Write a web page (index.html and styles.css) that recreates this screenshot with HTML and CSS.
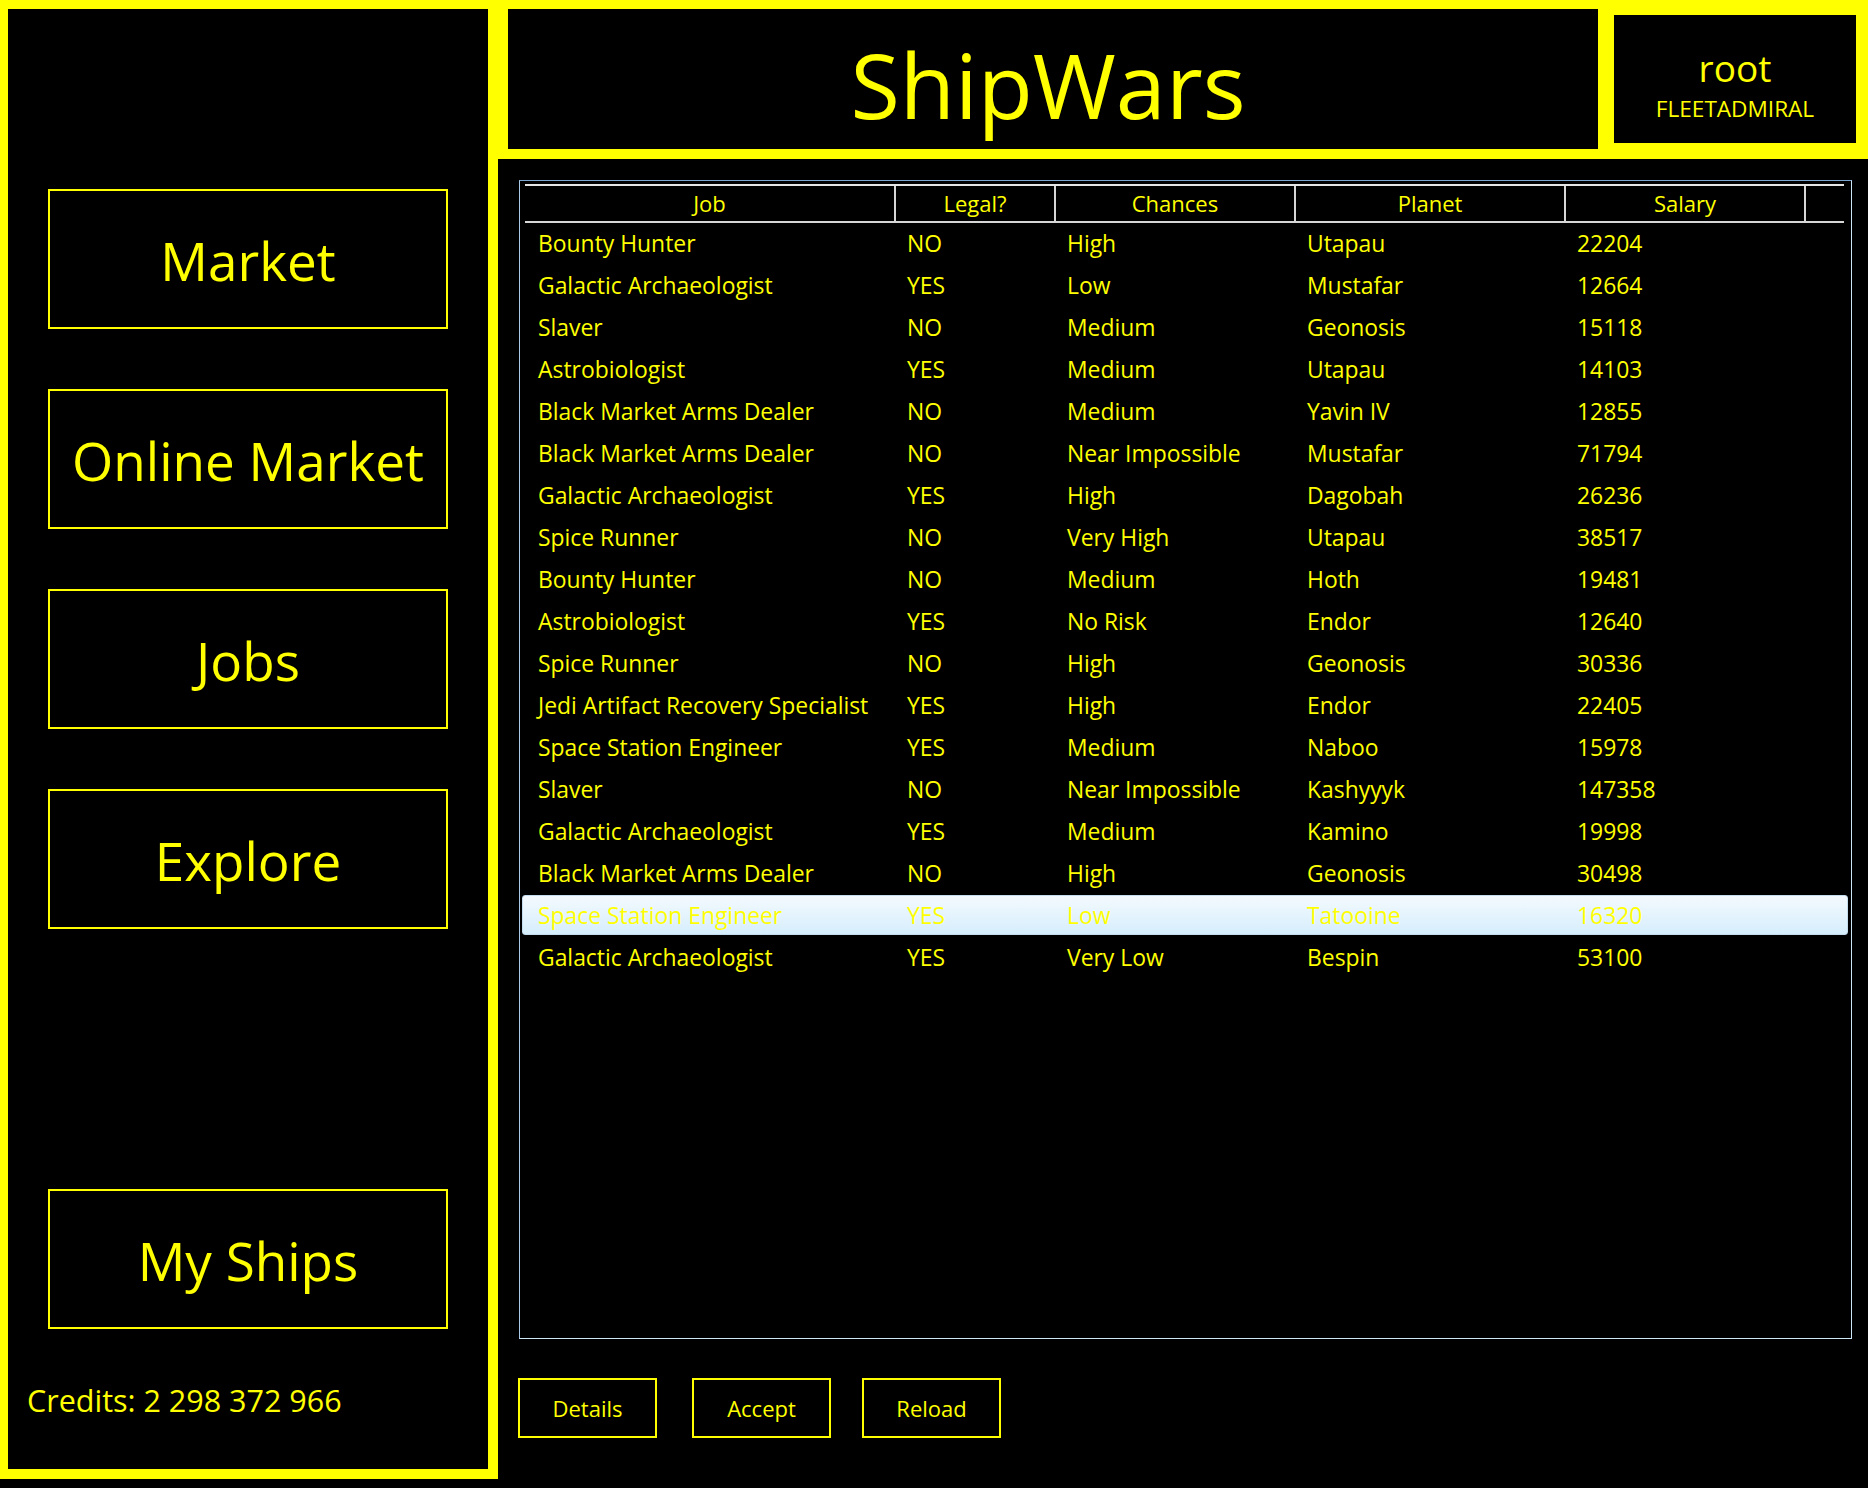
FILE: index.html
```html
<!DOCTYPE html>
<html lang="en">
<head>
<meta charset="utf-8">
<title>ShipWars</title>
<link rel="stylesheet" href="styles.css">
</head>
<body>
<div class="app">
  <aside class="side">
    <nav class="nav">
      <div class="nav-btn">Market</div>
      <div class="nav-btn">Online Market</div>
      <div class="nav-btn">Jobs</div>
      <div class="nav-btn">Explore</div>
      <div class="nav-btn nav-btn-ships">My Ships</div>
    </nav>
    <div class="credits">Credits: 2 298 372 966</div>
  </aside>
  <main class="main">
    <header class="header">
      <div class="title-box"><span class="title">ShipWars</span></div>
      <div class="user-box">
        <div class="user-name">root</div>
        <div class="user-rank">FLEETADMIRAL</div>
      </div>
    </header>
    <section class="content">
      <div class="table">
        <div class="thead">
          <div class="th c-job">Job</div>
          <div class="th c-legal">Legal?</div>
          <div class="th c-chance">Chances</div>
          <div class="th c-planet">Planet</div>
          <div class="th c-salary">Salary</div>
          <div class="th c-fill"></div>
        </div>
        <div class="tbody">
          <div class="tr"><div class="td c-job">Bounty Hunter</div><div class="td c-legal">NO</div><div class="td c-chance">High</div><div class="td c-planet">Utapau</div><div class="td c-salary">22204</div></div>
          <div class="tr"><div class="td c-job">Galactic Archaeologist</div><div class="td c-legal">YES</div><div class="td c-chance">Low</div><div class="td c-planet">Mustafar</div><div class="td c-salary">12664</div></div>
          <div class="tr"><div class="td c-job">Slaver</div><div class="td c-legal">NO</div><div class="td c-chance">Medium</div><div class="td c-planet">Geonosis</div><div class="td c-salary">15118</div></div>
          <div class="tr"><div class="td c-job">Astrobiologist</div><div class="td c-legal">YES</div><div class="td c-chance">Medium</div><div class="td c-planet">Utapau</div><div class="td c-salary">14103</div></div>
          <div class="tr"><div class="td c-job">Black Market Arms Dealer</div><div class="td c-legal">NO</div><div class="td c-chance">Medium</div><div class="td c-planet">Yavin IV</div><div class="td c-salary">12855</div></div>
          <div class="tr"><div class="td c-job">Black Market Arms Dealer</div><div class="td c-legal">NO</div><div class="td c-chance">Near Impossible</div><div class="td c-planet">Mustafar</div><div class="td c-salary">71794</div></div>
          <div class="tr"><div class="td c-job">Galactic Archaeologist</div><div class="td c-legal">YES</div><div class="td c-chance">High</div><div class="td c-planet">Dagobah</div><div class="td c-salary">26236</div></div>
          <div class="tr"><div class="td c-job">Spice Runner</div><div class="td c-legal">NO</div><div class="td c-chance">Very High</div><div class="td c-planet">Utapau</div><div class="td c-salary">38517</div></div>
          <div class="tr"><div class="td c-job">Bounty Hunter</div><div class="td c-legal">NO</div><div class="td c-chance">Medium</div><div class="td c-planet">Hoth</div><div class="td c-salary">19481</div></div>
          <div class="tr"><div class="td c-job">Astrobiologist</div><div class="td c-legal">YES</div><div class="td c-chance">No Risk</div><div class="td c-planet">Endor</div><div class="td c-salary">12640</div></div>
          <div class="tr"><div class="td c-job">Spice Runner</div><div class="td c-legal">NO</div><div class="td c-chance">High</div><div class="td c-planet">Geonosis</div><div class="td c-salary">30336</div></div>
          <div class="tr"><div class="td c-job">Jedi Artifact Recovery Specialist</div><div class="td c-legal">YES</div><div class="td c-chance">High</div><div class="td c-planet">Endor</div><div class="td c-salary">22405</div></div>
          <div class="tr"><div class="td c-job">Space Station Engineer</div><div class="td c-legal">YES</div><div class="td c-chance">Medium</div><div class="td c-planet">Naboo</div><div class="td c-salary">15978</div></div>
          <div class="tr"><div class="td c-job">Slaver</div><div class="td c-legal">NO</div><div class="td c-chance">Near Impossible</div><div class="td c-planet">Kashyyyk</div><div class="td c-salary">147358</div></div>
          <div class="tr"><div class="td c-job">Galactic Archaeologist</div><div class="td c-legal">YES</div><div class="td c-chance">Medium</div><div class="td c-planet">Kamino</div><div class="td c-salary">19998</div></div>
          <div class="tr"><div class="td c-job">Black Market Arms Dealer</div><div class="td c-legal">NO</div><div class="td c-chance">High</div><div class="td c-planet">Geonosis</div><div class="td c-salary">30498</div></div>
          <div class="tr tr-selected"><div class="td c-job">Space Station Engineer</div><div class="td c-legal">YES</div><div class="td c-chance">Low</div><div class="td c-planet">Tatooine</div><div class="td c-salary">16320</div></div>
          <div class="tr"><div class="td c-job">Galactic Archaeologist</div><div class="td c-legal">YES</div><div class="td c-chance">Very Low</div><div class="td c-planet">Bespin</div><div class="td c-salary">53100</div></div>
        </div>
      </div>
      <div class="actions">
        <div class="act-btn">Details</div>
        <div class="act-btn act-accept">Accept</div>
        <div class="act-btn act-reload">Reload</div>
      </div>
    </section>
  </main>
</div>
</body>
</html>
```
FILE: styles.css
```css
* {
  box-sizing: border-box;
}

html, body {
  margin: 0;
  padding: 0;
  background: #000;
}

body {
  font-family: "Open Sans", "Noto Sans", sans-serif;
  color: #ffff00;
  width: 1868px;
  height: 1488px;
  overflow: hidden;
}

.app {
  display: grid;
  grid-template-columns: 498px 1fr;
  height: 1488px;
}

/* ---------- side panel ---------- */
.side {
  height: 1479px;
  border-style: solid;
  border-color: #ffff00;
  border-width: 9px 10px 10px 8px;
  background: #000;
  display: flex;
  flex-direction: column;
}

.nav {
  display: flex;
  flex-direction: column;
  gap: 60px;
  padding: 180px 0 0 40px;
}

.nav-btn {
  width: 400px;
  height: 140px;
  border: 2px solid #ffff00;
  display: flex;
  align-items: center;
  justify-content: center;
  font-size: 53px;
  padding-top: 2px;
}

.nav-btn-ships {
  margin-top: 200px;
}

.credits {
  font-size: 30.5px;
  padding: 50px 0 0 19px;
}

/* ---------- header ---------- */
.main {
  display: flex;
  flex-direction: column;
}

.header {
  height: 159px;
  background: #ffff00;
  display: flex;
  gap: 16px;
  padding: 9px 12px 10px 10px;
}

.title-box {
  flex: 1;
  background: #000;
  display: flex;
  align-items: center;
  justify-content: center;
}

.title {
  font-size: 90px;
  line-height: 1;
  margin-top: 10px;
  margin-right: 10px;
}

.user-box {
  width: 242px;
  margin: 6px 0;
  background: #000;
  display: flex;
  flex-direction: column;
  align-items: center;
  justify-content: center;
  padding-top: 14px;
}

.user-name {
  font-size: 37px;
  line-height: 42px;
}

.user-rank {
  font-size: 22.6px;
  line-height: 34px;
  margin-top: 3px;
}

/* ---------- table ---------- */
.content {
  padding: 21px 16px 0 21px;
}

.table {
  height: 1159px;
  border: 1px solid #cfe6f4;
  border-top-color: #7ba6d2;
  border-left-color: #a9c9e6;
  padding: 3px 1px 0 1px;
  font-size: 22px;
}

.thead {
  display: flex;
  margin: 0 6px 0 4px;
  height: 39px;
  border-top: 2px solid #e6e6e6;
  border-bottom: 2px solid #d6d6d6;
}

.th {
  display: flex;
  align-items: center;
  justify-content: center;
  border-right: 2px solid #d6d6d6;
  padding-bottom: 2px;
}

.th.c-job { width: 371px; }
.th.c-legal { width: 160px; }
.th.c-chance { width: 240px; }
.th.c-planet { width: 270px; }
.th.c-salary { width: 240px; }
.th.c-fill { flex: 1; border-right: none; }

.tbody {
  margin: 0 2px 0 1px;
  font-size: 22.9px;
}

.tr {
  display: flex;
  height: 40px;
  margin-bottom: 2px;
  align-items: center;
  border: 1px solid transparent;
  border-radius: 3px;
  padding-top: 1px;
}

.td {
  white-space: nowrap;
  padding-left: 11px;
}

.td.c-job { width: 373px; padding-left: 15px; }
.td.c-legal { width: 160px; }
.td.c-chance { width: 240px; }
.td.c-planet { width: 270px; }
.td.c-salary { width: 240px; }

.tr-selected {
  background: linear-gradient(to bottom, #f4fafe 0%, #e6f4fd 45%, #d6eefc 100%);
  border-color: #c3dcee;
}

/* ---------- actions ---------- */
.actions {
  display: flex;
  padding: 39px 0 0 0;
  margin-left: -1px;
}

.act-btn {
  width: 139px;
  height: 60px;
  border: 2px solid #ffff00;
  display: flex;
  align-items: center;
  justify-content: center;
  font-size: 22px;
  padding-bottom: 1px;
}

.act-accept { margin-left: 35px; }
.act-reload { margin-left: 31px; }
```
